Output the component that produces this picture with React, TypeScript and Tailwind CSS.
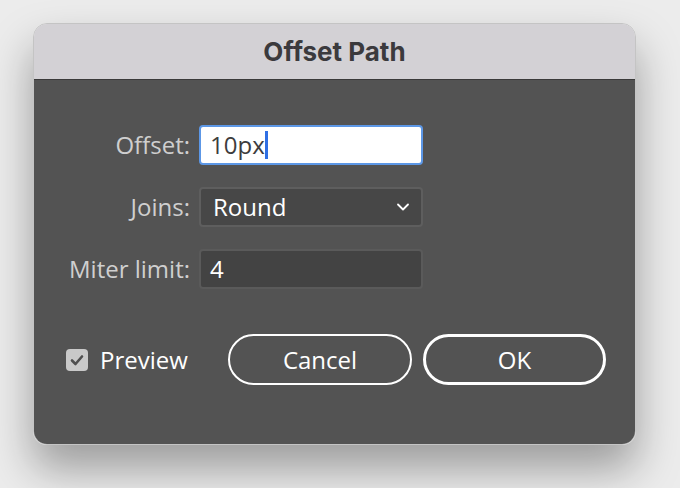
import { ChevronDown } from "lucide-react";

const body = { fontFamily: '"Open Sans", "Liberation Sans", sans-serif' };

export default function App() {
  return (
    <div className="w-[680px] h-[488px] bg-[#ececec] pt-[23px] pl-[33px]" style={body}>
      <div className="w-[603px] h-[422px] rounded-[14px] overflow-hidden flex flex-col border border-[#c4c4c4] shadow-[0_24px_44px_rgba(0,0,0,0.34)]">
        {/* Title bar */}
        <div className="h-[56px] shrink-0 bg-[#d3d1d5] border-b border-[#3a3a3a] flex items-center justify-center">
          <span
            className="text-[26px] font-bold text-[#3b3a3d]"
            style={{ fontFamily: 'Inter, "Liberation Sans", sans-serif' }}
          >
            Offset Path
          </span>
        </div>

        {/* Body */}
        <div className="flex-1 bg-[#535353] pt-[45px] flex flex-col">
          <div className="flex flex-col gap-[22px]">
            <Row label="Offset:">
              <div className="w-[224px] h-[40px] rounded-[4px] bg-white border-2 border-[#5c97e6] flex items-center pl-[9px]">
                <span className="text-[24px] text-[#3d3d3d] leading-none">10px</span>
                <span className="w-[3px] h-[28px] bg-[#2f6fe4]" />
              </div>
            </Row>
            <Row label="Joins:">
              <div className="w-[224px] h-[40px] rounded-[4px] bg-[#474747] border-2 border-[#5e5e5e] flex items-center pl-[12px] pr-[8px]">
                <span className="text-[24px] font-medium text-white leading-none flex-1">Round</span>
                <ChevronDown size={20} strokeWidth={2.2} className="text-white" />
              </div>
            </Row>
            <Row label="Miter limit:">
              <div className="w-[224px] h-[40px] rounded-[4px] bg-[#434343] border-2 border-[#5a5a5a] flex items-center pl-[9px]">
                <span className="text-[24px] font-medium text-white leading-none">4</span>
              </div>
            </Row>
          </div>

          <div className="mt-[45px] flex items-center">
            <div className="w-[194px] pl-[32px] flex items-center gap-[12px]">
              <div className="w-[22px] h-[22px] rounded-[4px] bg-[#c9c9c9] flex items-center justify-center">
                <svg width="16" height="16" viewBox="0 0 16 16" fill="none">
                  <path d="M3 8.5 L6.5 12 L13 4.5" stroke="#4f4f4f" strokeWidth="2.6" strokeLinecap="round" strokeLinejoin="round" />
                </svg>
              </div>
              <span className="text-[24px] font-medium text-white leading-none">Preview</span>
            </div>
            <button className="w-[184px] h-[51px] rounded-full border-2 border-white text-white text-[24px] font-medium flex items-center justify-center">
              Cancel
            </button>
            <button className="ml-[11px] w-[183px] h-[51px] rounded-full border-[3px] border-white text-white text-[24px] font-medium flex items-center justify-center">
              OK
            </button>
          </div>
        </div>
      </div>
    </div>
  );
}

function Row({ label, children }: { label: string; children: React.ReactNode }) {
  return (
    <div className="flex items-center">
      <div className="w-[165px] pr-[9px] text-right text-[24px] font-medium text-[#cfcfcf] leading-none">{label}</div>
      {children}
    </div>
  );
}
